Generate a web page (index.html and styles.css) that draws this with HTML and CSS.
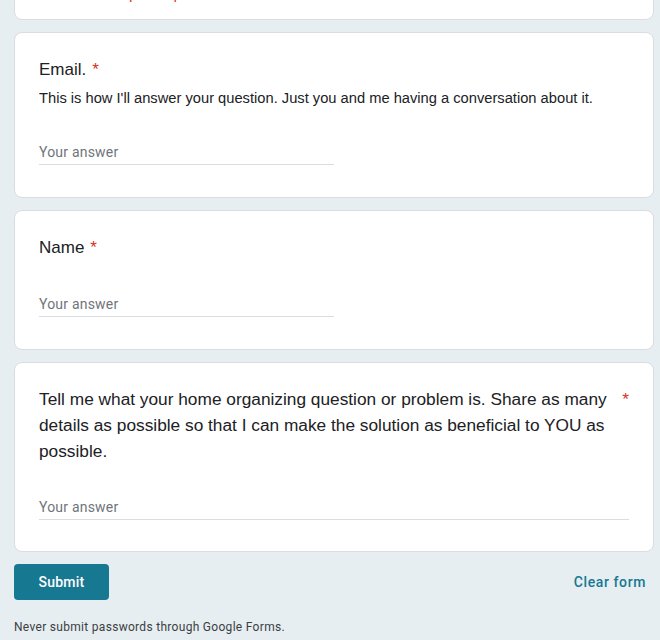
FILE: index.html
```html
<!DOCTYPE html>
<html lang="en">
<head>
<meta charset="utf-8">
<title>Form</title>
<link rel="stylesheet" href="styles.css">
</head>
<body>
<div class="page">
  <div class="card card-header">
    <div class="required-note">* Indicates required question</div>
  </div>

  <div class="card">
    <div class="q-title"><span class="q-text">Email.</span><span class="star">*</span></div>
    <div class="q-desc">This is how I'll answer your question. Just you and me having a conversation about it.</div>
    <div class="answer half">Your answer</div>
  </div>

  <div class="card">
    <div class="q-title"><span class="q-text">Name</span><span class="star">*</span></div>
    <div class="answer half">Your answer</div>
  </div>

  <div class="card card-long">
    <div class="q-title long"><span class="q-text">Tell me what your home organizing question or problem is. Share as many details as possible so that I can make the solution as beneficial to YOU as possible.</span><span class="star">*</span></div>
    <div class="answer full">Your answer</div>
  </div>

  <div class="actions">
    <button class="submit" type="button">Submit</button>
    <span class="clear">Clear form</span>
  </div>

  <div class="footer">Never submit passwords through Google Forms.</div>
</div>
</body>
</html>
```

FILE: styles.css
```css
html, body {
  margin: 0;
  padding: 0;
  background: #e6eef1;
}

.page {
  width: 640px;
  padding-left: 14px;
  display: flex;
  flex-direction: column;
  gap: 12px;
}

.card {
  background: #ffffff;
  border: 1px solid #dadce0;
  border-radius: 8px;
  padding: 24px 24px 32px 24px;
}

.card-header {
  margin-top: -41px;
  padding: 24px 24px 15px 24px;
}

.card-long {
  padding-top: 23px;
  padding-bottom: 31px;
}

.required-note {
  font-family: "Liberation Sans", Arial, sans-serif;
  font-size: 14.6px;
  line-height: 20px;
  color: #d93025;
}

.q-title {
  display: flex;
  align-items: flex-start;
  padding-top: 1px;
  font-family: "Liberation Sans", Arial, sans-serif;
  font-size: 17px;
  line-height: 24px;
  color: #202124;
}

.q-title.long {
  padding-top: 0;
  font-size: 17.3px;
  line-height: 26px;
  justify-content: space-between;
}

.q-title.long .q-text {
  max-width: 578px;
}

.star {
  color: #d93025;
  padding-left: 6px;
}

.q-desc {
  margin-top: 6px;
  font-family: "Liberation Sans", Arial, sans-serif;
  font-size: 14.7px;
  line-height: 20px;
  color: #202124;
}

.answer {
  margin-top: 30px;
  padding-top: 2px;
  height: 24px;
  line-height: 24px;
  border-bottom: 1px solid #dadce0;
  font-family: Roboto, "Noto Sans", sans-serif;
  font-size: 14px;
  letter-spacing: 0.2px;
  color: #70757a;
}

.card-long .answer {
  margin-top: 29px;
}

.answer.half {
  width: 295px;
}

.actions {
  display: flex;
  justify-content: space-between;
  align-items: center;
}

.submit {
  width: 95px;
  height: 36px;
  border: none;
  border-radius: 4px;
  background: #177892;
  color: #ffffff;
  font-family: Roboto, "Noto Sans", sans-serif;
  font-size: 14px;
  font-weight: 500;
  letter-spacing: 0.25px;
  padding: 0;
}

.clear {
  margin-right: 8px;
  font-family: Roboto, "Noto Sans", sans-serif;
  font-size: 14px;
  font-weight: 500;
  letter-spacing: 0.6px;
  color: #177892;
}

.footer {
  margin-top: 8px;
  font-family: Roboto, "Noto Sans", sans-serif;
  font-size: 12px;
  letter-spacing: 0.3px;
  color: #3c4043;
}
```
